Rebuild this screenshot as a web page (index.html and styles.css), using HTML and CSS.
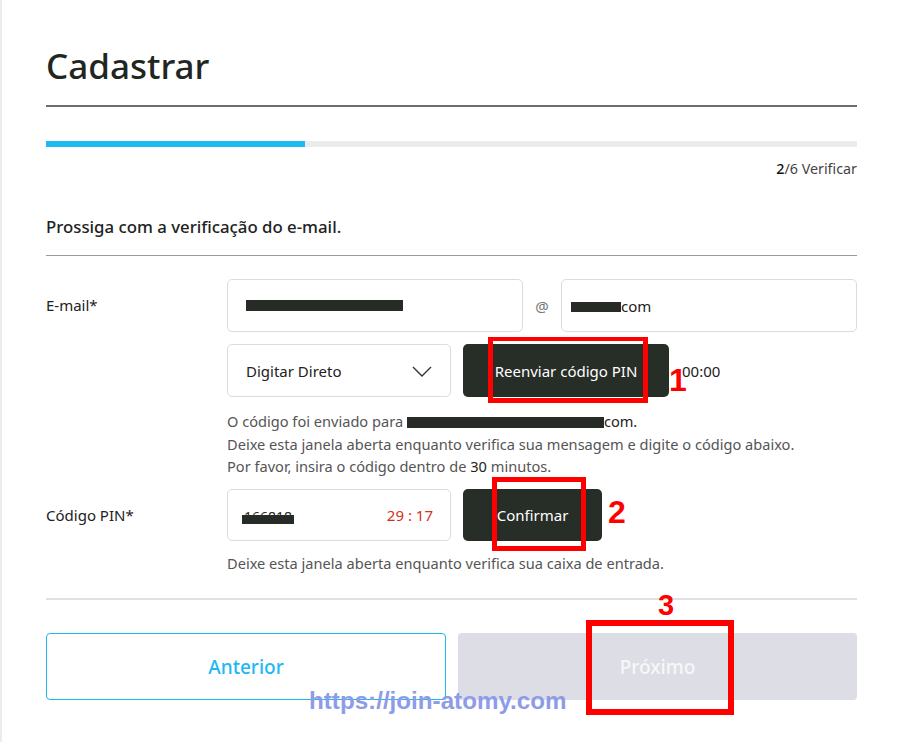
FILE: index.html
```html
<!DOCTYPE html>
<html lang="pt">
<head>
    <meta charset="UTF-8">
    <meta name="viewport" content="width=device-width, initial-scale=1.0">
    <title>Cadastrar</title>
    <link rel="stylesheet" href="styles.css">
</head>
<body>
    <div class="page">
        <h1 class="title">Cadastrar</h1>

        <div class="progress"><div class="progress-fill"></div></div>
        <div class="step"><b>2</b>/6 Verificar</div>

        <div class="section-title">Prossiga com a verificação do e-mail.</div>

        <div class="form-row">
            <div class="label">E-mail*</div>
            <div class="field">
                <div class="email-line">
                    <div class="box email-box"><span class="redact redact-user"></span></div>
                    <div class="at">@</div>
                    <div class="box email-box"><span class="redact redact-domain"></span>com</div>
                </div>
                <div class="action-line">
                    <div class="box select-box">
                        Digitar Direto
                        <svg class="chevron" width="20" height="11" viewBox="0 0 20 11"><polyline points="1,1 10,10 19,1" fill="none" stroke="#333" stroke-width="1.4"/></svg>
                    </div>
                    <div class="dark-btn resend-btn">Reenviar código PIN</div>
                    <div class="timer">00:00</div>
                </div>
                <div class="help">
                    O código foi enviado para <span class="redact redact-mail"></span><span class="dark">com.</span><br>
                    Deixe esta janela aberta enquanto verifica sua mensagem e digite o código abaixo.<br>
                    Por favor, insira o código dentro de <span class="dark">30</span> minutos.
                </div>
            </div>
        </div>

        <div class="form-row pin-row">
            <div class="label">Código PIN*</div>
            <div class="field">
                <div class="action-line">
                    <div class="box pin-box">
                        <span class="pin-value">166818</span>
                        <span class="countdown">29 : 17</span>
                    </div>
                    <div class="dark-btn confirm-btn">Confirmar</div>
                </div>
                <div class="help help-pin">Deixe esta janela aberta enquanto verifica sua caixa de entrada.</div>
            </div>
        </div>

        <div class="buttons">
            <div class="btn btn-prev">Anterior</div>
            <div class="btn btn-next">Próximo</div>
        </div>
    </div>

    <!-- annotations drawn over the screenshot -->
    <div class="mark mark-1"></div>
    <div class="mark mark-2"></div>
    <div class="mark mark-3"></div>
    <div class="num num-1">1</div>
    <div class="num num-2">2</div>
    <div class="num num-3">3</div>
    <div class="watermark">https://join-atomy.com</div>
</body>
</html>
```

FILE: styles.css
```css
body {
    margin: 0;
    padding: 0;
    background: #fff;
    font-family: 'Noto Sans', 'Open Sans', sans-serif;
    color: #222;
    position: relative;
    height: 742px;
    overflow: hidden;
}
.page {
    border-left: 2px solid #ececec;
    padding: 0 43px 0 44px;
    height: 742px;
    box-sizing: border-box;
}
.title {
    margin: 0;
    padding-top: 41px;
    padding-bottom: 15px;
    font-size: 35px;
    font-weight: 500;
    line-height: 49px;
    color: #222622;
    border-bottom: 2px solid #6b6d70;
}
.progress {
    margin-top: 34px;
    height: 6px;
    background: #ececec;
}
.progress-fill {
    width: 259px;
    height: 6px;
    background: #1cb9f2;
}
.step {
    margin-top: 12px;
    text-align: right;
    font-size: 14.3px;
    line-height: 20px;
    color: #444;
}
.step b {
    font-weight: 500;
    color: #111;
}
.section-title {
    margin-top: 36px;
    padding-bottom: 16px;
    font-size: 16.8px;
    font-weight: 500;
    line-height: 24px;
    border-bottom: 1px solid #9a9a9a;
}
.form-row {
    display: flex;
    margin-top: 23px;
}
.pin-row {
    margin-top: 11px;
}
.label {
    width: 181px;
    flex: none;
    font-size: 15px;
    line-height: 53px;
    color: #222;
}
.field {
    flex: 1;
}
.email-line,
.action-line {
    display: flex;
    align-items: center;
}
.action-line {
    gap: 12px;
}
.email-line + .action-line {
    margin-top: 12px;
}
.box {
    height: 53px;
    box-sizing: border-box;
    border: 1px solid #dcdcdc;
    border-radius: 5px;
    display: flex;
    align-items: center;
    padding: 0 18px;
    font-size: 15px;
    color: #222;
}
.email-box {
    width: 296px;
}
.at {
    width: 38px;
    text-align: center;
    font-size: 15px;
    color: #777;
}
.redact {
    display: inline-block;
    background: #262b25;
}
.redact-user {
    width: 157px;
    height: 11px;
    margin-left: 0;
}
.redact-domain {
    width: 50px;
    height: 10px;
    margin-left: -9px;
    margin-top: 2px;
}
.redact-mail {
    width: 197px;
    height: 11px;
    vertical-align: -1px;
}
.select-box {
    width: 224px;
    justify-content: space-between;
    padding-left: 18px;
    padding-right: 18px;
}
.chevron {
    margin-top: 1px;
}
.dark-btn {
    height: 53px;
    box-sizing: border-box;
    border-radius: 5px;
    background: #272d27;
    color: #fff;
    font-size: 15px;
    display: flex;
    align-items: center;
    justify-content: center;
}
.resend-btn {
    width: 206px;
}
.confirm-btn {
    width: 139px;
    height: 52px;
}
.timer {
    margin-left: 1px;
    font-size: 15px;
    color: #222;
}
.help {
    margin-top: 13px;
    font-size: 14.6px;
    line-height: 22.5px;
    color: #555;
}
.help .dark {
    color: #222;
}
.help-pin {
    margin-top: 11px;
}
.pin-box {
    width: 224px;
    height: 52px;
    justify-content: space-between;
    padding-left: 14px;
    padding-right: 17px;
}
.pin-value {
    font-size: 14px;
    line-height: 14px;
    color: #262b25;
    padding: 0 2px;
    background: linear-gradient(to bottom, transparent 35%, #262b25 35%);
    margin-top: 4px;
}
.countdown {
    color: #d2301e;
    font-size: 15px;
}
.buttons {
    display: flex;
    gap: 12px;
    margin-top: 24px;
    padding-top: 33px;
    border-top: 2px solid #e0e0e6;
}
.btn {
    height: 67px;
    box-sizing: border-box;
    border-radius: 4px;
    display: flex;
    align-items: center;
    justify-content: center;
    font-size: 19px;
    font-weight: 500;
}
.btn-prev {
    width: 400px;
    border: 1px solid #1cb9f2;
    color: #1cb9f2;
    background: #fff;
}
.btn-next {
    flex: 1;
    background: #dcdde5;
    color: #f7f7f7;
}
.mark {
    position: absolute;
    border: 4px solid #ff0000;
    box-sizing: border-box;
}
.mark-1 {
    left: 488px;
    top: 337px;
    width: 160px;
    height: 66px;
    border-width: 4px 5px 5px 5px;
}
.mark-2 {
    left: 492px;
    top: 477px;
    width: 94px;
    height: 74px;
    border-width: 5px;
}
.mark-3 {
    left: 586px;
    top: 620px;
    width: 148px;
    height: 95px;
    border-width: 6px;
}
.num {
    position: absolute;
    color: #ff0000;
    font-family: 'Liberation Sans', Arial, sans-serif;
    font-weight: bold;
    font-size: 32px;
    line-height: 32px;
}
.num-1 {
    left: 669px;
    top: 364px;
}
.num-2 {
    left: 608px;
    top: 496px;
}
.num-3 {
    left: 658px;
    top: 591px;
    font-size: 29px;
    line-height: 29px;
}
.watermark {
    position: absolute;
    left: 309px;
    top: 687px;
    font-family: 'Liberation Sans', Arial, sans-serif;
    font-weight: bold;
    font-size: 24.2px;
    line-height: 28px;
    color: #8d9ce8;
}
```
